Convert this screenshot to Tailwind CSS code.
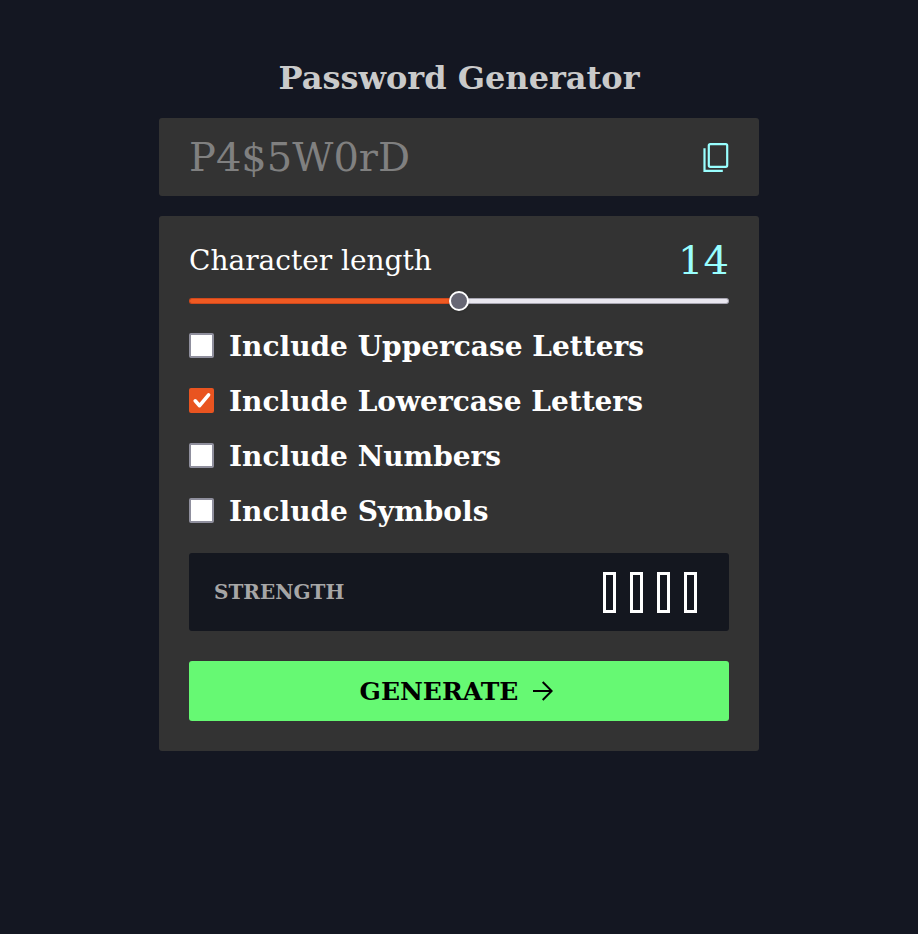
<!DOCTYPE html>
<html lang="en">
<head>
<meta charset="utf-8">
<title>Password Generator</title>
<script src="https://cdn.jsdelivr.net/npm/@tailwindcss/browser@4"></script>
</head>
<body class="min-h-screen bg-[#141722] font-['DejaVu_Serif',serif] text-white">
<main class="mx-auto w-[600px] pt-[59px]">
  <h1 class="h-[59px] text-center text-[32px] leading-[38px] font-bold text-[#cacaca]">Password Generator</h1>
  <section class="flex h-[78px] items-center justify-between rounded-[3px] bg-[#333333] px-[30px]">
    <span class="text-[40px] leading-[48px] text-[#808080]">P4$5W0rD</span>
    <svg class="mt-px h-[30px] w-[27px]" viewBox="0 0 27 30" fill="none" stroke="#99ffff" stroke-width="2.2"><rect x="6.8" y="1.1" width="18.4" height="22.7" rx="1.5"/><path d="M2.5 5.3V27.8H20.8"/></svg>
  </section>
  <section class="mt-5 h-[535px] rounded-[3px] bg-[#333333] px-[30px] pt-5">
    <div class="flex h-[48px] items-center justify-between">
      <span class="pt-0.5 text-[28px]">Character length</span>
      <span class="text-[40px] leading-[48px] text-[#99ffff]">14</span>
    </div>
    <div class="relative mt-[7px] flex h-5 items-center">
      <div class="h-[6px] w-1/2 rounded-l-full border border-r-0 border-[#d0481c] bg-[#f05a22]"></div>
      <div class="h-[6px] w-1/2 rounded-r-full border border-l-0 border-[#a8a6b2] bg-[#e9e7ef]"></div>
      <div class="absolute left-[260px] top-0 h-5 w-5 rounded-full border-2 border-white bg-[#676774] shadow"></div>
    </div>
    <div class="mt-[7px] flex flex-col">
      <label class="flex h-[55px] items-center gap-[15px] text-[28px] font-bold"><span class="h-[25px] w-[25px] rounded-[2px] border-2 border-[#8f8f9d] bg-white"></span><span class="pt-0.5">Include Uppercase Letters</span></label>
      <label class="flex h-[55px] items-center gap-[15px] text-[28px] font-bold"><span class="h-[25px] w-[25px] rounded-[2px] bg-[#e95420]"><svg viewBox="0 0 25 25" fill="none" stroke="white" stroke-width="3.6" stroke-linecap="round" stroke-linejoin="round"><path d="M6.2 12.8l4.4 4.9 9-10.8"/></svg></span><span class="pt-0.5">Include Lowercase Letters</span></label>
      <label class="flex h-[55px] items-center gap-[15px] text-[28px] font-bold"><span class="h-[25px] w-[25px] rounded-[2px] border-2 border-[#8f8f9d] bg-white"></span><span class="pt-0.5">Include Numbers</span></label>
      <label class="flex h-[55px] items-center gap-[15px] text-[28px] font-bold"><span class="h-[25px] w-[25px] rounded-[2px] border-2 border-[#8f8f9d] bg-white"></span><span class="pt-0.5">Include Symbols</span></label>
    </div>
    <div class="mt-[15px] flex h-[78px] items-center justify-between rounded-[3px] bg-[#14171f] pr-[32px] pl-[25px]">
      <span class="text-[20px] font-bold text-[#a6a6a6]">STRENGTH</span>
      <div class="flex gap-[14px]"><i class="h-[41px] w-[13px] border-3 border-white"></i><i class="h-[41px] w-[13px] border-3 border-white"></i><i class="h-[41px] w-[13px] border-3 border-white"></i><i class="h-[41px] w-[13px] border-3 border-white"></i></div>
    </div>
    <button class="mt-[30px] flex h-[60px] w-full items-center justify-center gap-[15px] rounded-[3px] bg-[#66f973] pr-[5px] text-[25px] font-bold text-black"><span class="pt-0.5">GENERATE</span>
      <svg class="h-5 w-5" viewBox="0 0 20 20" fill="none" stroke="black" stroke-width="2"><path d="M0 10H19M9.7 1L18.7 10L9.7 19"/></svg>
    </button>
  </section>
</main>
</body>
</html>
